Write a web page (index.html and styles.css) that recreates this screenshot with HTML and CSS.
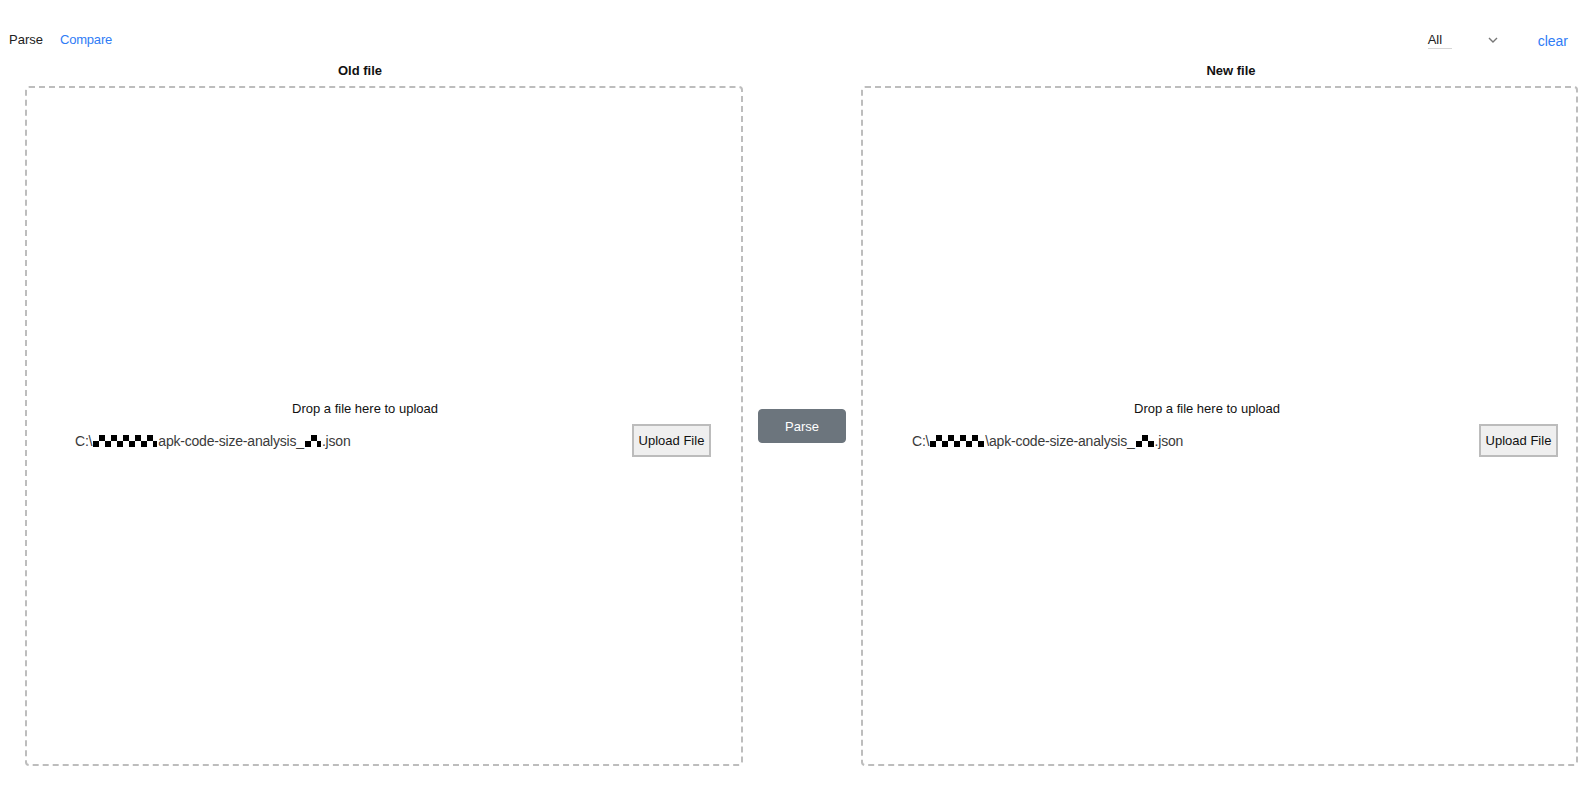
FILE: index.html
```html
<!DOCTYPE html>
<html lang="en">
<head>
<meta charset="utf-8">
<title>APK code size analysis</title>
<link rel="stylesheet" href="styles.css">
</head>
<body>
<header class="topbar">
  <nav class="tabs">
    <span class="tab">Parse</span>
    <span class="tab tab-active">Compare</span>
  </nav>
  <div class="tools">
    <div class="select">
      <span class="select-value">All</span>
      <svg class="chevron" width="10" height="6" viewBox="0 0 10 6"><path d="M1 1l4 4 4-4" fill="none" stroke="#777" stroke-width="1.4"/></svg>
    </div>
    <span class="clear">clear</span>
  </div>
</header>

<div class="titles">
  <div class="title title-old">Old file</div>
  <div class="title-gap"></div>
  <div class="title title-new">New file</div>
</div>

<main class="compare">
  <section class="dropzone dropzone-old">
    <div class="drop-text">Drop a file here to upload</div>
    <div class="file-row">
      <span class="path">C:\<span class="mask mask-a"></span>apk-code-size-analysis_<span class="mask mask-b"></span>.json</span>
      <button class="upload">Upload File</button>
    </div>
  </section>
  <div class="middle">
    <button class="parse">Parse</button>
  </div>
  <section class="dropzone dropzone-new">
    <div class="drop-text">Drop a file here to upload</div>
    <div class="file-row">
      <span class="path">C:\<span class="mask mask-c"></span>\apk-code-size-analysis_<span class="mask mask-d"></span>.json</span>
      <button class="upload">Upload File</button>
    </div>
  </section>
</main>
</body>
</html>
```

FILE: styles.css
```css
* { box-sizing: border-box; }

body {
  margin: 0;
  background: #fff;
  font-family: "Liberation Sans", Arial, sans-serif;
  font-size: 13px;
  color: #1a1a1a;
}

.topbar {
  display: flex;
  justify-content: space-between;
  align-items: center;
  height: 20px;
  margin-top: 30px;
  padding: 0 27px 0 9px;
}

.tabs {
  display: flex;
  gap: 17px;
  line-height: 20px;
}

.tab { color: #222; }
.tab-active { color: #2f7cf6; letter-spacing: -0.2px; }

.tools {
  display: flex;
  align-items: center;
}

.select {
  display: flex;
  align-items: center;
  width: 72px;
  justify-content: space-between;
  padding-right: 2px;
}

.select-value {
  display: inline-block;
  width: 24px;
  line-height: 16px;
  border-bottom: 1px solid #d6d6d6;
  color: #222;
}

.chevron { display: block; }

.clear {
  margin-left: 38px;
  font-size: 14px;
  color: #2f7cf6;
  line-height: 20px;
  position: relative;
  top: 1px;
}

.titles {
  display: flex;
  margin-top: 12px;
  padding-left: 25px;
  line-height: 18px;
}

.title {
  font-weight: bold;
  text-align: center;
  color: #111;
}

.title-old { width: 718px; padding-right: 48px; }
.title-gap { width: 118px; }
.title-new { width: 717px; padding-left: 23px; }

.compare {
  display: flex;
  margin-top: 6px;
  padding-left: 25px;
}

.dropzone {
  height: 680px;
  border: 2px dashed #bdbdbd;
  border-radius: 4px;
  display: flex;
  flex-direction: column;
  justify-content: center;
  padding-top: 5px;
}

.dropzone-old { width: 718px; padding-left: 48px; padding-right: 30px; }
.dropzone-new { width: 717px; padding-left: 49px; padding-right: 18px; }

.drop-text {
  text-align: center;
  line-height: 18px;
  padding-right: 56px;
  color: #111;
}

.file-row {
  display: flex;
  justify-content: space-between;
  align-items: center;
  margin-top: 6px;
}

.path {
  display: flex;
  align-items: center;
  color: #3a3a3a;
  font-size: 14px;
  letter-spacing: -0.2px;
  line-height: 16px;
}

.mask {
  display: inline-block;
  height: 12px;
  background-color: #fff;
  background-image: conic-gradient(#000 0 25%, #fff 0 50%, #000 0 75%, #fff 0);
  background-size: 12px 12px;
}

.mask-a { width: 64px; margin: 0 1px; }
.mask-b { width: 16px; margin: 0 1px; }
.mask-c { width: 54px; margin: 0 1px; }
.mask-d { width: 18px; margin: 0 1px; }

.upload {
  width: 79px;
  height: 33px;
  padding: 0;
  background: #efefef;
  border: 2px solid #bcbcbc;
  border-radius: 0;
  font-family: "Liberation Sans", Arial, sans-serif;
  font-size: 13px;
  color: #111;
}

.middle {
  width: 118px;
  display: flex;
  align-items: center;
  justify-content: center;
}

.parse {
  width: 88px;
  height: 34px;
  padding: 0;
  background: #6c757d;
  border: 1px solid #6c757d;
  border-radius: 4px;
  color: #fff;
  font-family: "Liberation Sans", Arial, sans-serif;
  font-size: 13px;
}
```
